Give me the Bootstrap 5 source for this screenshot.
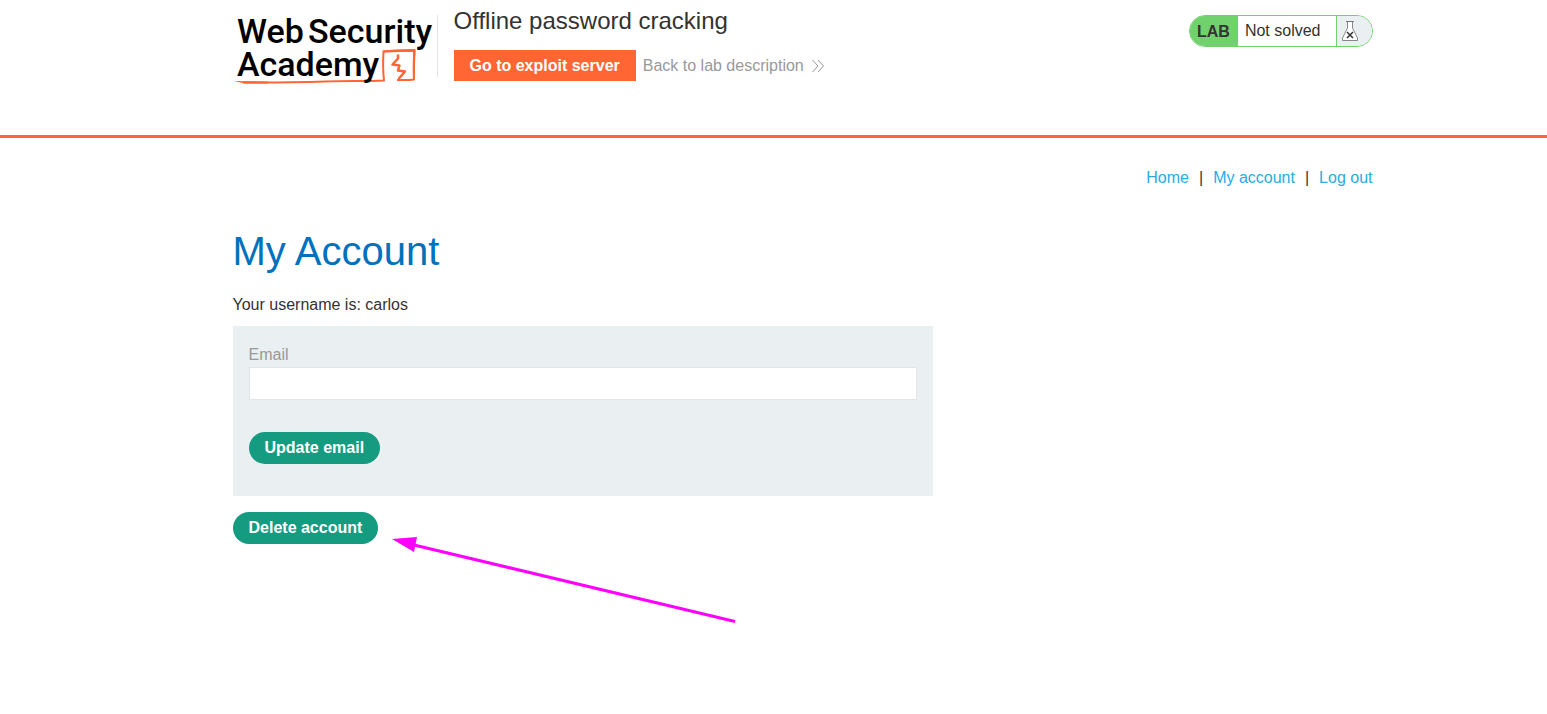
<!DOCTYPE html>
<html lang="en">
<head>
<meta charset="utf-8">
<meta name="viewport" content="width=device-width, initial-scale=1">
<title>Offline password cracking</title>
<link href="https://cdn.jsdelivr.net/npm/bootstrap@5.3.0/dist/css/bootstrap.min.css" rel="stylesheet">
<style>
  body { font-family: "Liberation Sans", Arial, sans-serif; font-size: 16px; line-height: 24px; color: #333332; }
  a { text-decoration: none; }
  .page-width { max-width: 1200px; padding-left: 59px; padding-right: 1px; }
  .lab-header { border-bottom: 3px solid #ff6633; padding-bottom: 54px; }
  .logo-link { border-right: 1px solid #e5e5e5; width: 205px; height: 62px; margin-top: 15px; }
  .logo-link svg { display: block; overflow: visible; }
  .lab-title { font-size: 24px; line-height: 28px; margin: 7px 0 15px; font-weight: 400; }
  .btn-exploit { background: #ff6633; color: #fff; font-weight: 700; line-height: 31px; padding: 0 16px; border: 0; border-radius: 0; }
  .btn-exploit:hover { background: #e6582a; color: #fff; }
  .back-link { color: #999; margin-left: 7px; }
  .lab-status { border: 1px solid #70d16d; border-radius: 16px; height: 32px; margin-top: 15px; overflow: hidden; line-height: 30px; }
  .status-tag { background: #70d16d; font-weight: 700; padding: 1px 8px 0 7px; }
  .status-text { padding: 0 15px 0 7px; }
  .status-icon { background: #eaeff2; border-left: 1px solid #70d16d; width: 36px; padding-left: 4px; }
  .site-nav { padding: 28px 0 37px; }
  .site-nav a { color: #29abe2; }
  .nav-sep { padding: 0 10px; }
  .account-title { color: #0071bc; font-size: 40px; line-height: 48px; font-weight: 400; margin-bottom: 18px; }
  .account-body { max-width: 700px; }
  .username-line { margin-bottom: 9px; }
  .email-form { background: #eaeff2; padding: 17px 16px 32px; }
  .email-form label { color: #999; }
  .email-form .form-control { height: 33px; border: 1px solid #e3e5e6; border-radius: 0; padding: 4px 8px; margin: 0 0 32px; }
  .btn-action { background: #159b80; color: #fff; font-weight: 700; line-height: 32px; padding: 0 16px; border: 0; }
  .btn-action:hover { background: #10806a; color: #fff; }
  .pointer-arrow { left: 159px; top: 24px; pointer-events: none; }
</style>
</head>
<body class="min-vh-100">
<header class="lab-header">
  <div class="container page-width d-flex align-items-start">
    <a class="logo-link flex-shrink-0" href="#" aria-label="Web Security Academy">
      <svg width="204" height="72" viewBox="0 0 204 72">
        <g fill="none" stroke="#ff6633" stroke-linejoin="round" stroke-width="2">
          <path d="M10 67.500 C40 67.500 60 67.500 92 66.500 C115 65.500 130 66.500 151 65.500 C150 58 150 46 150.500 36.500 C160 35.500 172 36 181.500 35.500 C180.500 46 180.500 56 181 64.500 C175 65.500 170 65 164 65"/>
          <path d="M165 39.500 V43.500 L159.500 49.500 L166.500 50.500 L165 55.500 L172 56.500 L165.500 64" stroke-width="2.500"/>
        </g>
        <path d="M0.500 66 L35 66.500 V68.500 H12 Z M180 35 H182.500 L181.500 65 H180 Z M149.500 35.500 L163 34.500 L182.500 34 L182 36.500 L151 37.500 Z" fill="#ff6633"/>
        <g font-family="Roboto, sans-serif" font-weight="500" font-size="34" fill="#000">
          <text x="4" y="28">Web</text>
          <text x="75" y="28">Security</text>
          <text x="4" y="61">Academy</text>
        </g>
      </svg>
    </a>
    <div class="ms-3">
      <h2 class="lab-title">Offline password cracking</h2>
      <div class="d-flex align-items-center">
        <button type="button" class="btn btn-exploit">Go to exploit server</button>
        <a class="back-link d-flex align-items-center" href="#">Back to lab description
          <svg class="ms-2" width="13" height="14" viewBox="0 0 13 14" fill="none" stroke="#999"><path d="M0.500 1 L6 7 L0.500 13 M6 1 L11.500 7 L6 13"/></svg>
        </a>
      </div>
    </div>
    <div class="lab-status d-flex ms-auto">
      <span class="status-tag">LAB</span>
      <span class="status-text">Not solved</span>
      <span class="status-icon">
        <svg class="d-block mt-1" width="18" height="22" viewBox="0 0 18 22" fill="none">
          <path d="M6.500 1.500 V8 L1.500 18 V20.500 H16.500 V18 L11.500 8 V1.500 Z" fill="#fff" stroke="#888"/>
          <path d="M5 1.500 H13" stroke="#777"/>
          <path d="M6 12 L12 18 M12 12 L6 18" stroke="#333" stroke-width="1.500"/>
        </svg>
      </span>
    </div>
  </div>
</header>
<main class="container page-width">
  <nav class="site-nav d-flex justify-content-end">
    <a href="#">Home</a><span class="nav-sep">|</span><a href="#">My account</a><span class="nav-sep">|</span><a href="#">Log out</a>
  </nav>
  <h1 class="account-title">My Account</h1>
  <div class="account-body">
    <p class="username-line">Your username is: carlos</p>
    <form class="email-form mb-3">
      <label class="d-block" for="email">Email</label>
      <input id="email" type="email" class="form-control">
      <button type="button" class="btn btn-action rounded-pill">Update email</button>
    </form>
    <div class="position-relative">
      <button type="button" class="btn btn-action rounded-pill">Delete account</button>
      <svg class="pointer-arrow position-absolute" width="346" height="88" viewBox="0 0 346 88" fill="#f0f">
        <path d="M0 3 L25 1 L22 16 Z"/>
        <path d="M22 9 L343 85.500" stroke="#f0f" stroke-width="3"/>
      </svg>
    </div>
  </div>
</main>
<script src="https://cdn.jsdelivr.net/npm/bootstrap@5.3.0/dist/js/bootstrap.bundle.min.js"></script>
</body>
</html>
